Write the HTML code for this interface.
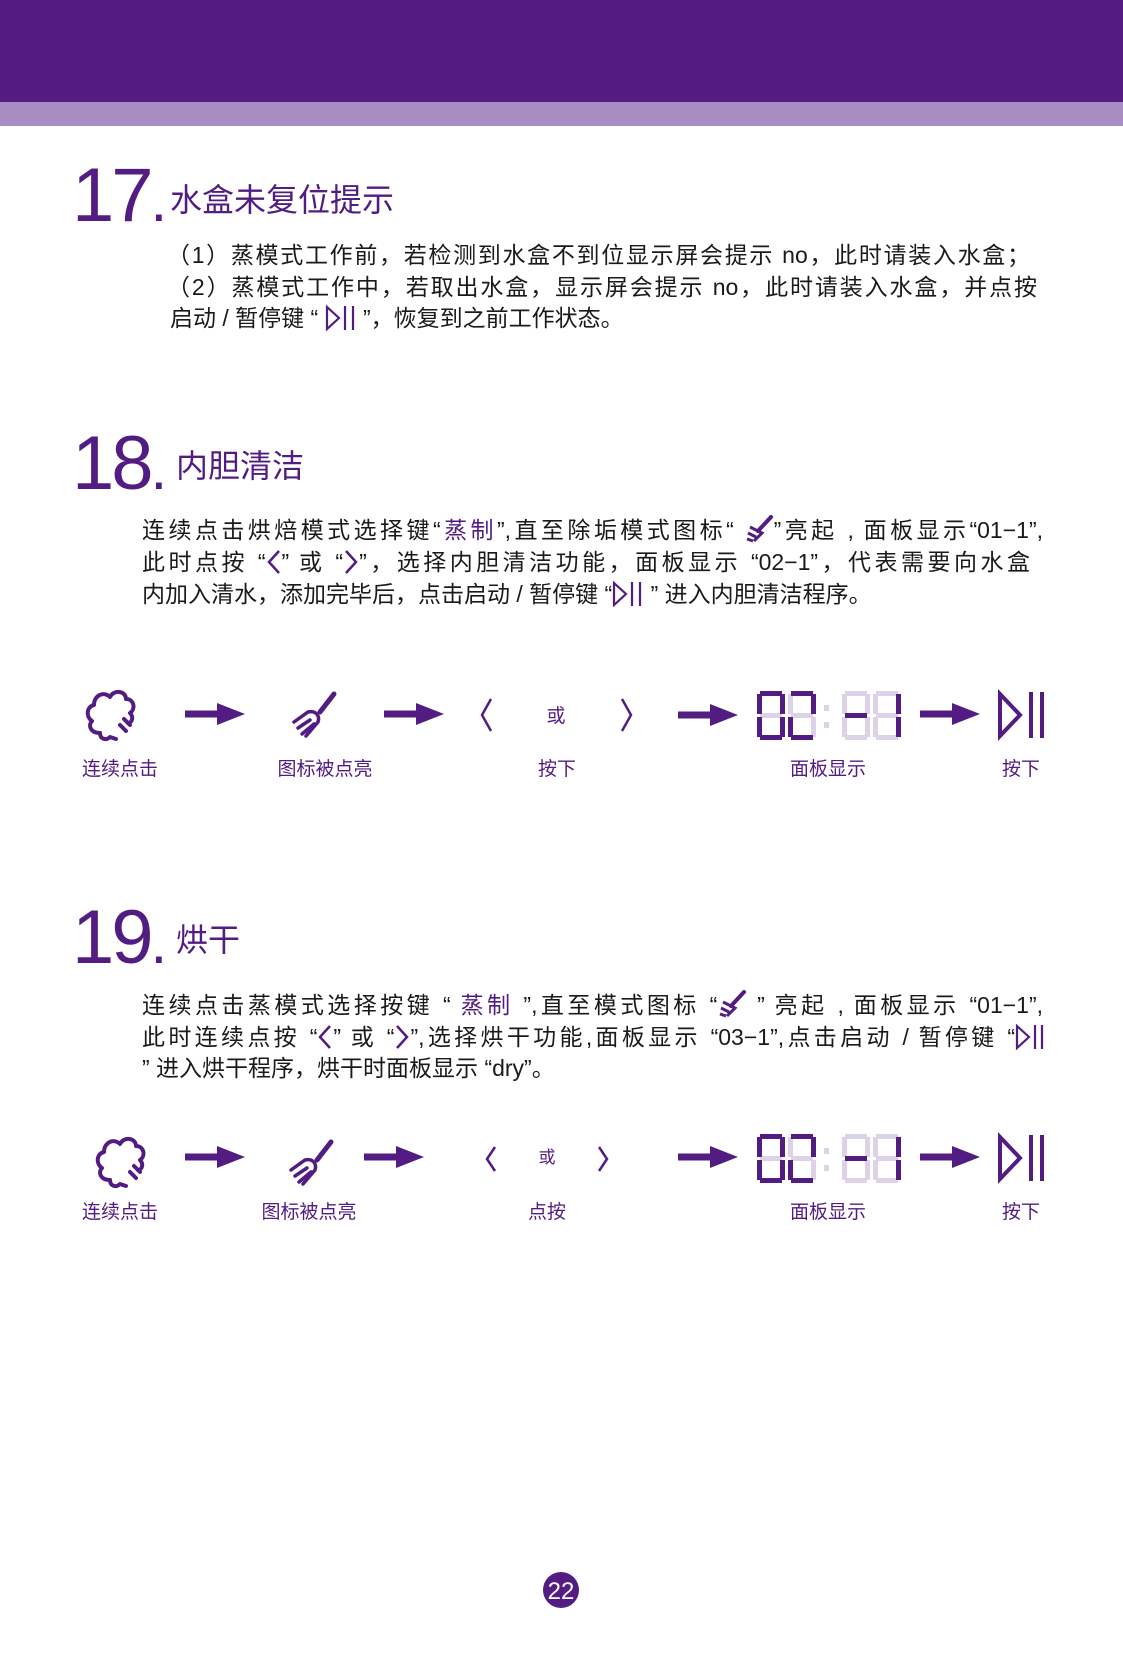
<!DOCTYPE html>
<html><head><meta charset="utf-8"><style>
*{margin:0;padding:0;box-sizing:border-box}
body{width:1123px;height:1654px;position:relative;background:#fff;font-family:"Liberation Sans","Noto Sans CJK SC",sans-serif;color:#1a1a1a;overflow:hidden}
.a{position:absolute}
.ln{position:absolute;font-size:23px;line-height:32px;white-space:nowrap;height:32px}
.j{text-align:justify;text-align-last:justify}
.p{color:#521c82}
.num{position:absolute;font-size:76px;line-height:1;color:#521c82;letter-spacing:-3px}
.tt{position:absolute;font-size:32px;line-height:1;color:#521c82}
.lb{position:absolute;font-size:19px;color:#521c82;transform:translateX(-50%);white-space:nowrap;line-height:1}
svg.i{vertical-align:-5px}
</style></head><body>
<div class="a" style="left:0;top:0;width:1123px;height:102px;background:#521c82"></div>
<div class="a" style="left:0;top:102px;width:1123px;height:24px;background:#a88dc3"></div>

<div class="num" style="left:72px;top:158px">17<span style="font-size:60px">.</span></div>
<div class="tt" style="left:170px;top:184px">水盒未复位提示</div>
<div class="ln j" style="left:167px;top:239px;width:863px">（1）蒸模式工作前，若检测到水盒不到位显示屏会提示 no，此时请装入水盒；</div>
<div class="ln j" style="left:167px;top:271px;width:870px">（2）蒸模式工作中，若取出水盒，显示屏会提示 no，此时请装入水盒，并点按</div>
<div class="ln" style="left:170px;top:302px">启动 / 暂停键 “ <svg class="i" width="32" height="26" viewBox="0 0 32 26"><path d="M2 2 L14 13 L2 24 Z" fill="none" stroke="#521c82" stroke-width="2.2"/><path d="M20 1V25M28 1V25" stroke="#521c82" stroke-width="2.2"/></svg> ”，恢复到之前工作状态。</div>

<div class="num" style="left:72px;top:426px">18<span style="font-size:60px">.</span></div>
<div class="tt" style="left:176px;top:450px">内胆清洁</div>
<div class="ln j" style="left:142px;top:514px;width:901px">连续点击烘焙模式选择键“<span class="p">蒸制</span>”,直至除垢模式图标“ <svg class="i" width="30" height="28" viewBox="0 0 30 28"><path d="M27 2 L14 16" stroke="#521c82" stroke-width="4" stroke-linecap="round"/><path d="M6 12 L18 18 L10 26 M4 18 L12 22 M3 24 L9 26" stroke="#521c82" stroke-width="3" fill="none"/></svg>”亮起 , 面板显示“01−1”,</div>
<div class="ln j" style="left:142px;top:546px;width:888px">此时点按 “<svg class="i" width="16" height="26" viewBox="0 0 16 26"><path d="M13 2 L3 13 L13 24" fill="none" stroke="#521c82" stroke-width="2.5"/></svg>” 或 “<svg class="i" width="16" height="26" viewBox="0 0 16 26"><path d="M3 2 L13 13 L3 24" fill="none" stroke="#521c82" stroke-width="2.5"/></svg>”，选择内胆清洁功能，面板显示 “02−1”，代表需要向水盒</div>
<div class="ln" style="left:142px;top:578px">内加入清水，添加完毕后，点击启动 / 暂停键 “<svg class="i" width="32" height="26" viewBox="0 0 32 26"><path d="M2 2 L14 13 L2 24 Z" fill="none" stroke="#521c82" stroke-width="2.2"/><path d="M20 1V25M28 1V25" stroke="#521c82" stroke-width="2.2"/></svg> ” 进入内胆清洁程序。</div>

<div class="num" style="left:72px;top:900px">19<span style="font-size:60px">.</span></div>
<div class="tt" style="left:176px;top:924px">烘干</div>
<div class="ln j" style="left:142px;top:989px;width:901px">连续点击蒸模式选择按键 “ <span class="p">蒸制</span> ”,直至模式图标 “<svg class="i" width="30" height="28" viewBox="0 0 30 28"><path d="M27 2 L14 16" stroke="#521c82" stroke-width="4" stroke-linecap="round"/><path d="M6 12 L18 18 L10 26 M4 18 L12 22 M3 24 L9 26" stroke="#521c82" stroke-width="3" fill="none"/></svg> ” 亮起 , 面板显示 “01−1”,</div>
<div class="ln j" style="left:142px;top:1021px;width:903px">此时连续点按 “<svg class="i" width="16" height="26" viewBox="0 0 16 26"><path d="M13 2 L3 13 L13 24" fill="none" stroke="#521c82" stroke-width="2.5"/></svg>” 或 “<svg class="i" width="16" height="26" viewBox="0 0 16 26"><path d="M3 2 L13 13 L3 24" fill="none" stroke="#521c82" stroke-width="2.5"/></svg>”,选择烘干功能,面板显示 “03−1”,点击启动 / 暂停键 “<svg class="i" width="30" height="26" viewBox="0 0 30 26"><path d="M2 2 L14 13 L2 24 Z" fill="none" stroke="#521c82" stroke-width="2.2"/><path d="M20 1V25M27 1V25" stroke="#521c82" stroke-width="2.2"/></svg></div>
<div class="ln" style="left:142px;top:1052px">” 进入烘干程序，烘干时面板显示 “dry”。</div>

<svg class="a" style="left:0;top:0" width="1123" height="1654" viewBox="0 0 1123 1654">
<defs>
<g id="cloud" fill="none" stroke="#521c82" stroke-width="4" stroke-linecap="round" stroke-linejoin="round">
<path d="M14 44 C4 44 2 36 6 32 C0 28 0 18 8 16 C8 6 18 2 24 8 C28 0 40 2 40 10 C48 10 50 20 44 24 C48 28 46 34 42 34"/>
<path d="M14 44 C14 50 20 52 24 48 L30 50"/>
<path d="M34 36 L40 42 M38 30 L44 36"/>
</g>
<g id="fork" fill="none" stroke="#521c82" stroke-width="3.5" stroke-linecap="round">
<path d="M46 4 L32 22" stroke-width="5"/>
<path d="M6 32 L20 22 C28 20 32 26 30 32 L18 46"/>
<path d="M10 38 L22 30 M14 44 L26 34"/>
</g>
<g id="arr"><rect x="0" y="-3.5" width="34" height="7" fill="#521c82"/><path d="M32 -11 L60 0 L32 11 Z" fill="#521c82"/></g>
<g id="play" fill="none" stroke="#521c82" stroke-width="4"><path d="M2 2 L22 23 L2 44 Z"/><path d="M33 0V46M44 0V46"/></g>
</defs>

<use href="#cloud" x="86" y="689"/>
<use href="#arr" x="185" y="714"/>
<use href="#fork" x="288" y="690"/>
<use href="#arr" x="384" y="714"/>
<path d="M491 699 L482 715 L491 731" fill="none" stroke="#521c82" stroke-width="2.5"/>
<text x="556" y="722" font-size="19" fill="#521c82" text-anchor="middle" font-family="Noto Sans CJK SC">或</text>
<path d="M622 699 L631 715 L622 731" fill="none" stroke="#521c82" stroke-width="2.5"/>
<use href="#arr" x="678" y="715"/>
<use href="#arr" x="920" y="714"/>
<use href="#play" x="998" y="692"/>

<use href="#cloud" x="96" y="1136"/>
<use href="#arr" x="185" y="1157"/>
<use href="#fork" x="285" y="1138"/>
<use href="#arr" x="364" y="1157"/>
<path d="M495 1147 L487 1159 L495 1171" fill="none" stroke="#521c82" stroke-width="2.5"/>
<text x="547" y="1163" font-size="17" fill="#521c82" text-anchor="middle" font-family="Noto Sans CJK SC">或</text>
<path d="M599 1147 L607 1159 L599 1171" fill="none" stroke="#521c82" stroke-width="2.5"/>
<use href="#arr" x="678" y="1157"/>
<use href="#arr" x="920" y="1157"/>
<use href="#play" x="998" y="1135"/>

<g id="disp1" transform="translate(757,691)">
<g fill="#ddd3e8">
<rect x="3" y="0" width="22" height="5"/><rect x="0" y="3" width="5" height="20"/><rect x="23" y="3" width="5" height="20"/><rect x="3" y="22" width="22" height="5"/><rect x="0" y="26" width="5" height="20"/><rect x="23" y="26" width="5" height="20"/><rect x="3" y="44" width="22" height="5"/>
<rect x="34" y="0" width="22" height="5"/><rect x="31" y="3" width="5" height="20"/><rect x="54" y="3" width="5" height="20"/><rect x="34" y="22" width="22" height="5"/><rect x="31" y="26" width="5" height="20"/><rect x="54" y="26" width="5" height="20"/><rect x="34" y="44" width="22" height="5"/>
<rect x="67" y="14" width="5" height="6"/><rect x="67" y="31" width="5" height="6"/>
<rect x="88" y="0" width="22" height="5"/><rect x="85" y="3" width="5" height="20"/><rect x="108" y="3" width="5" height="20"/><rect x="88" y="22" width="22" height="5"/><rect x="85" y="26" width="5" height="20"/><rect x="108" y="26" width="5" height="20"/><rect x="88" y="44" width="22" height="5"/>
<rect x="119" y="0" width="22" height="5"/><rect x="116" y="3" width="5" height="20"/><rect x="139" y="3" width="5" height="20"/><rect x="119" y="22" width="22" height="5"/><rect x="116" y="26" width="5" height="20"/><rect x="139" y="26" width="5" height="20"/><rect x="119" y="44" width="22" height="5"/>
</g>
<g fill="#521c82">
<rect x="3" y="0" width="22" height="5"/><rect x="0" y="3" width="5" height="20"/><rect x="23" y="3" width="5" height="20"/><rect x="0" y="26" width="5" height="20"/><rect x="23" y="26" width="5" height="20"/><rect x="3" y="44" width="22" height="5"/>
<rect x="34" y="0" width="22" height="5"/><rect x="54" y="3" width="5" height="20"/><rect x="31" y="26" width="5" height="20"/><rect x="34" y="44" width="22" height="5"/>
<rect x="88" y="22" width="22" height="5"/>
<rect x="139" y="3" width="5" height="20"/><rect x="139" y="26" width="5" height="20"/>
</g>
</g>
<use href="#disp1" x="0" y="443"/>

<circle cx="561" cy="1590" r="18" fill="#521c82"/>
<text x="561" y="1599" font-size="24" fill="#fff" text-anchor="middle" font-family="Liberation Sans">22</text>
</svg>

<div class="lb" style="left:120px;top:760px">连续点击</div>
<div class="lb" style="left:325px;top:760px">图标被点亮</div>
<div class="lb" style="left:557px;top:760px">按下</div>
<div class="lb" style="left:828px;top:760px">面板显示</div>
<div class="lb" style="left:1021px;top:760px">按下</div>

<div class="lb" style="left:120px;top:1203px">连续点击</div>
<div class="lb" style="left:309px;top:1203px">图标被点亮</div>
<div class="lb" style="left:547px;top:1203px">点按</div>
<div class="lb" style="left:828px;top:1203px">面板显示</div>
<div class="lb" style="left:1021px;top:1203px">按下</div>
</body></html>
